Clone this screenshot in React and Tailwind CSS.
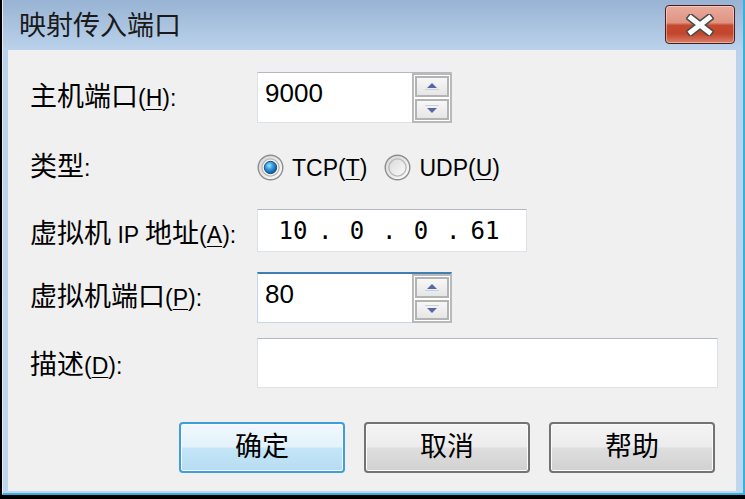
import React from "react";

function SpinBtn({ up }) {
  return (
    <div className="flex-1 flex items-center justify-center border-2 border-[#b3b3b3] bg-[linear-gradient(to_bottom,#f7f7f7,#e6e6e6)]">
      <svg width="14" height="9" viewBox="0 0 14 9">
        {up ? (
          <>
            <path d="M7 1 L12 6 L2 6 Z" fill="#5468a8" />
            <rect x="0" y="7" width="14" height="1" fill="#c9cfe0" />
          </>
        ) : (
          <>
            <rect x="0" y="0" width="14" height="1" fill="#c9cfe0" />
            <path d="M2 3 L12 3 L7 8 Z" fill="#5468a8" />
          </>
        )}
      </svg>
    </div>
  );
}

function Spin({ value, focused }) {
  return (
    <div
      className={
        focused
          ? "flex w-[195px] h-[51px] bg-white border border-[#c3d8ec] border-t-2 border-t-[#3f7fb3]"
          : "flex w-[195px] h-[51px] bg-white border border-[#dde1e8] border-t-[#b5b8c0]"
      }
    >
      <div className="flex-1 flex items-center pl-[7px] pb-[8px] text-[26px] text-black">{value}</div>
      <div className="w-[40px] flex flex-col gap-[2px] p-[1px] border-2 border-[#b9b9b9] -mr-[1px] -mb-[1px]">
        <SpinBtn up />
        <SpinBtn />
      </div>
    </div>
  );
}

function Radio({ checked }) {
  return (
    <svg width="27" height="27" viewBox="0 0 27 27">
      <defs>
        <linearGradient id="rOuter" x1="0" y1="0" x2="1" y2="1">
          <stop offset="0" stopColor="#d4d4d4" />
          <stop offset="1" stopColor="#ffffff" />
        </linearGradient>
        <linearGradient id="rInner" x1="0" y1="0" x2="1" y2="1">
          <stop offset="0" stopColor="#dadada" />
          <stop offset="1" stopColor="#fbfbfb" />
        </linearGradient>
        <radialGradient id="rDot" cx="0.4" cy="0.35" r="0.7">
          <stop offset="0" stopColor="#9fe3ff" />
          <stop offset="0.45" stopColor="#2f98de" />
          <stop offset="1" stopColor="#0d4c8c" />
        </radialGradient>
      </defs>
      <circle cx="13.5" cy="13.5" r="12.3" fill="url(#rOuter)" stroke="#8e8e8e" strokeWidth="1.4" />
      <circle cx="13.5" cy="13.5" r="8.6" fill={checked ? "#f6f6f6" : "url(#rInner)"} stroke="#b8b8b8" strokeWidth="1.4" />
      {checked && <circle cx="13.5" cy="13.5" r="6.2" fill="url(#rDot)" stroke="#1d4f80" strokeWidth="1" />}
    </svg>
  );
}

function Label({ children }) {
  return <div className="w-[227px] text-[27px] leading-none text-black whitespace-nowrap">{children}</div>;
}

function L({ children }) {
  return <span className="text-[23px]">{children}</span>;
}

function U({ children }) {
  return <span className="underline underline-offset-[3px] decoration-1">{children}</span>;
}

function Button({ children, primary }) {
  return (
    <div
      className={
        primary
          ? "w-[166px] h-[51px] flex items-center justify-center rounded-[4px] border-2 border-[#3c9fdc] bg-[linear-gradient(to_bottom,#f0f8fd_0%,#e3f2fb_48%,#c4e5f7_52%,#b6dcf2_100%)] shadow-[inset_0_0_0_1px_#ffffff] text-[27px] text-black"
          : "w-[166px] h-[51px] flex items-center justify-center rounded-[4px] border-2 border-[#737373] bg-[linear-gradient(to_bottom,#f4f4f4_0%,#ececec_48%,#dedede_52%,#d1d1d1_100%)] shadow-[inset_0_0_0_1px_#fbfbfb] text-[27px] text-black"
      }
    >
      {children}
    </div>
  );
}

export default function App() {
  return (
    <div className="w-[745px] h-[499px] bg-black flex flex-col pl-[2px] pb-[4px] font-[family-name:'Liberation_Sans','Noto_Sans_CJK_SC',sans-serif]">
      <div className="flex-1 flex flex-col border-l border-l-[#e4edf7] pl-[5px] pr-[7px] pb-[2px] border-r-2 border-b-2 border-r-[#35b0e0] border-b-[#35b0e0] bg-[linear-gradient(to_bottom,#98b3d3_0px,#bad2eb_50px,#bed6ee_100%)]">
        <div className="h-[50px] flex items-start justify-between pl-[11px] pr-[1px]">
          <div className="pt-[10px] text-[27px] leading-[32px] text-[#1a1a1a]">映射传入端口</div>
          <div className="mt-[5px] w-[70px] h-[39px] rounded-[4px] border border-[#4a1c1c] bg-[linear-gradient(to_bottom,#eaaa9c_0%,#df9482_45%,#c5492f_52%,#c2452c_75%,#d9806a_100%)] shadow-[inset_0_0_0_1px_rgba(255,235,230,0.45)] flex items-center justify-center">
            <svg width="28" height="22" viewBox="0 0 28 22">
              <path d="M5 4 L23 18 M23 4 L5 18" stroke="#4a4a4a" strokeWidth="8" strokeLinecap="square" />
              <path d="M5 4 L23 18 M23 4 L5 18" stroke="#ffffff" strokeWidth="5" strokeLinecap="square" />
            </svg>
          </div>
        </div>
        <div className="flex-1 bg-[#f0f0f0] flex flex-col pl-[22px] pt-[22px]">
          <div className="flex items-center h-[51px]">
            <Label>
              主机端口<L>(<U>H</U>):</L>
            </Label>
            <Spin value="9000" />
          </div>
          <div className="flex items-center h-[48px] mt-[20px]">
            <Label>
              类型<L>:</L>
            </Label>
            <div className="flex items-center text-[23px] text-black">
              <Radio checked />
              <span className="ml-[8px] mt-[2px]">
                TCP(<U>T</U>)
              </span>
              <span className="ml-[17px] flex">
                <Radio />
              </span>
              <span className="ml-[8px] mt-[2px]">
                UDP(<U>U</U>)
              </span>
            </div>
          </div>
          <div className="flex items-center h-[43px] mt-[18px]">
            <div className="pt-[8px]">
              <Label>
                虚拟机<L> IP </L>地址<L>(<U>A</U>):</L>
              </Label>
            </div>
            <div className="w-[270px] h-[43px] bg-white border border-[#dde1e8] border-t-[#b5b8c0] flex items-center pl-[10px] text-[24px] text-black font-[family-name:'DejaVu_Sans_Mono',monospace]">
              <span className="w-[50px] text-center">10</span>
              <span className="w-[14px] text-center">.</span>
              <span className="w-[50px] text-center">0</span>
              <span className="w-[14px] text-center">.</span>
              <span className="w-[50px] text-center">0</span>
              <span className="w-[14px] text-center">.</span>
              <span className="w-[50px] text-center">61</span>
            </div>
          </div>
          <div className="flex items-center h-[51px] mt-[20px]">
            <Label>
              虚拟机端口<L>(<U>P</U>):</L>
            </Label>
            <Spin value="80" focused />
          </div>
          <div className="flex items-center h-[50px] mt-[15px]">
            <div className="pt-[4px]">
              <Label>
                描述<L>(<U>D</U>):</L>
              </Label>
            </div>
            <div className="w-[461px] h-[50px] bg-white border border-[#dde1e8] border-t-[#b5b8c0]" />
          </div>
          <div className="flex mt-[34px] ml-[149px] gap-[19px]">
            <Button primary>确定</Button>
            <Button>取消</Button>
            <Button>帮助</Button>
          </div>
        </div>
      </div>
    </div>
  );
}
